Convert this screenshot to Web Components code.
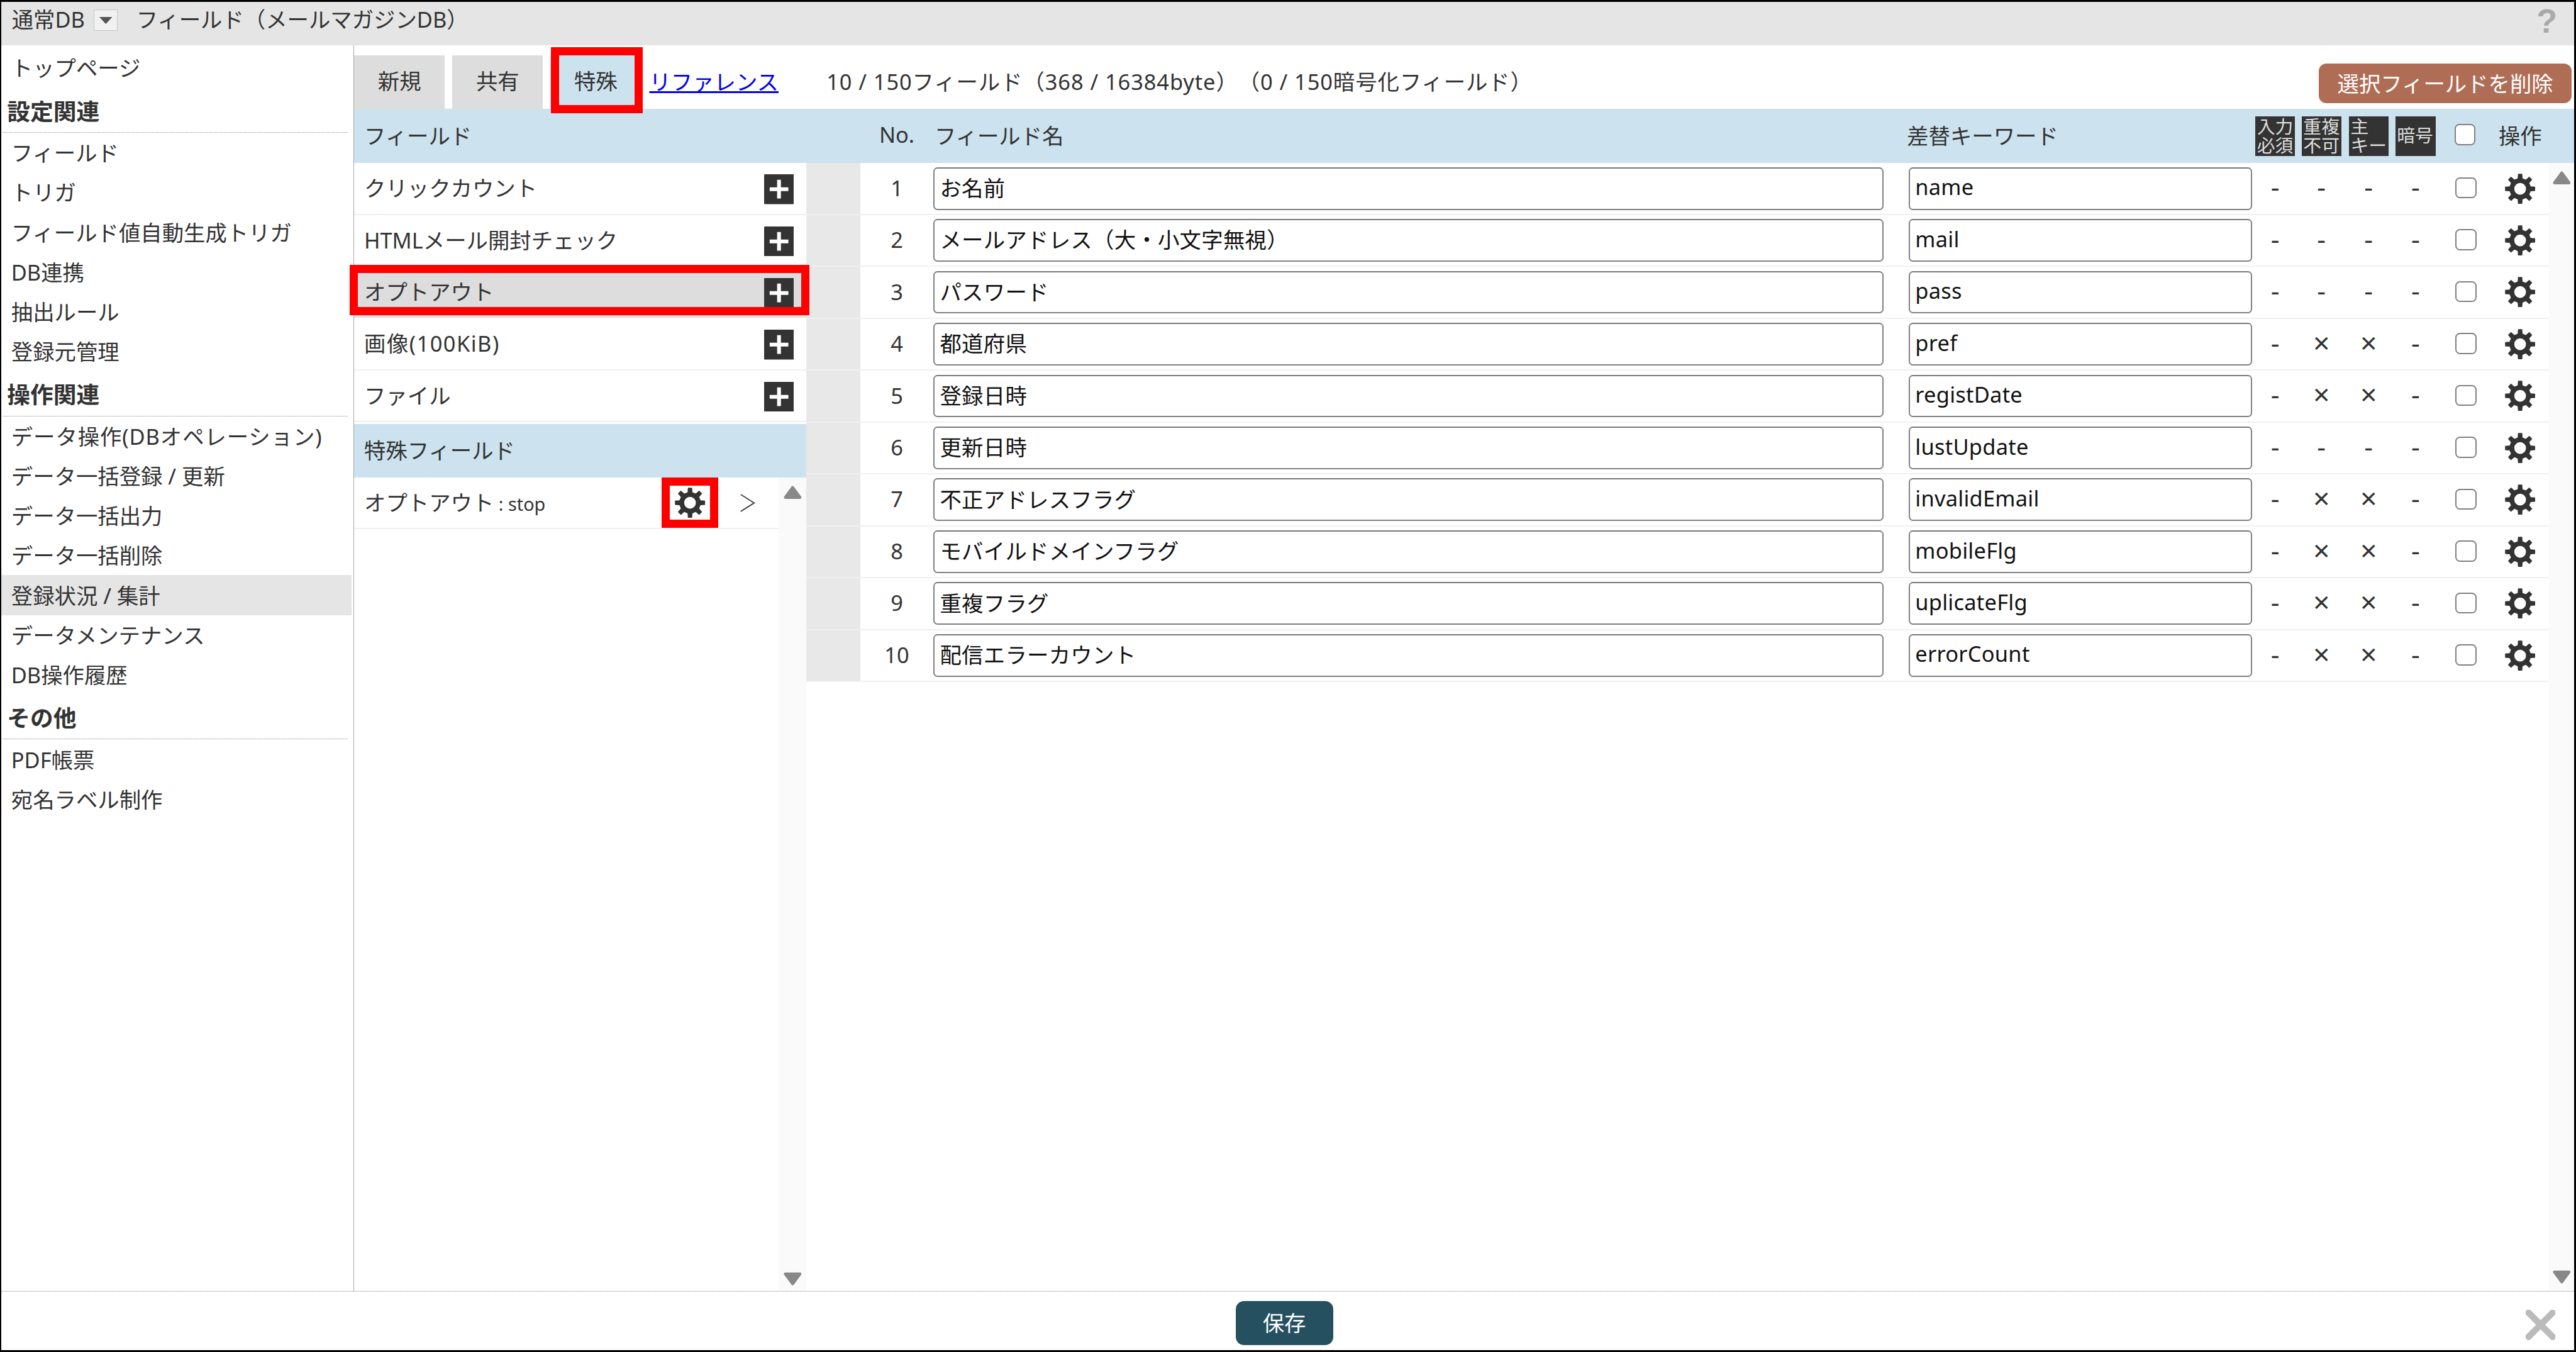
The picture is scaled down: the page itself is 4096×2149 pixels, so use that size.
<!DOCTYPE html>
<html lang="ja"><head><meta charset="utf-8"><title>フィールド</title>
<style>
html,body{margin:0;padding:0;overflow:hidden;background:#fff}
body{font-family:"Noto Sans","Noto Sans CJK JP",sans-serif;font-size:37px;color:#333;text-spacing-trim:space-all}
</style></head><body>
<script>
function gearPath(){
  let p='',R=26,r=18.5;
  const pt=(rad,deg)=>{const t=deg*Math.PI/180;return (rad*Math.sin(t)).toFixed(2)+' '+(-rad*Math.cos(t)).toFixed(2)};
  for(let i=0;i<8;i++){const a=i*45;
    p+=(i?'L':'M')+pt(r,a-13)+'L'+pt(R,a-8)+'L'+pt(R,a+8)+'L'+pt(r,a+13);
  }
  return p+'ZM-10 0A10 10 0 1 0 10 0A10 10 0 1 0 -10 0Z';
}
const GEAR=gearPath();
function def(name,css,html){
  customElements.define(name,class extends HTMLElement{
    constructor(){super();this.attachShadow({mode:'open'});
      if(typeof html!=='function')this.shadowRoot.innerHTML='<style>'+css+'</style>'+html;}
    connectedCallback(){if(typeof html==='function'&&!this._i){this._i=1;this.shadowRoot.innerHTML='<style>'+css+'</style>'+html(this)}}
  });
}
def('gear-icon',':host{display:block;width:52px;height:52px}svg{display:block;width:100%;height:100%}',
 '<svg viewBox="-26 -26 52 52"><path fill="#333" fill-rule="evenodd" d="'+GEAR+'"/></svg>');
def('plus-icon',':host{display:block;width:51px;height:51px}svg{display:block;width:100%;height:100%}',
 '<svg viewBox="0 0 51 51"><rect width="51" height="51" rx="1" fill="#333"/><path d="M9.5 25.5H41.5M25.5 9.5V41.5" stroke="#fff" stroke-width="6.5"/></svg>');
def('tick-box',':host{display:block;width:36px;height:36px;box-sizing:border-box;background:#fff;border:2.6px solid #808080;border-radius:8px}','');
def('tri-icon',':host{display:block;width:31px;height:23px}svg{display:block;width:100%;height:100%}',
 '<svg viewBox="0 0 31 23"><path d="M15.5 3L28 20H3Z" fill="#888" stroke="#888" stroke-width="5" stroke-linejoin="round"/></svg>');
def('scroll-strip',':host{display:flex;flex-direction:column;justify-content:space-between;align-items:center;background:#fafafa;box-sizing:border-box}tri-icon:last-child{transform:rotate(180deg)}',
 '<tri-icon></tri-icon><tri-icon></tri-icon>');
def('red-mark',':host{display:block;position:absolute;box-sizing:border-box;border:14px solid #f00;pointer-events:none}','');

def('title-bar',`:host{display:flex;align-items:center;height:74px;flex:none;background:#e5e5e5;padding-left:18px;position:relative;padding-bottom:17px;box-sizing:border-box}
 .dd{width:41px;height:37px;box-sizing:border-box;border:2px solid #c4c4c4;background:#f1f1f1;border-radius:3px;margin:6px 32px 0 15px;display:flex;align-items:center;justify-content:center}
 .q{margin:9px 29px 0 auto;font:bold 58px/1 "Liberation Sans",sans-serif;color:#aaa}`,
 `<span>通常DB</span><span class="dd"><svg width="22" height="12" viewBox="0 0 22 12"><path d="M0 0H22L11 12Z" fill="#555"/></svg></span><span><slot></slot></span><span class="q">?</span>`);

def('menu-item',`:host{display:flex;align-items:center;height:68px;box-sizing:border-box;padding:0 0 3px 17px;white-space:nowrap;margin-right:4px}
 :host([on]){background:#e5e5e5}:host([top]){height:70px}`,'<slot></slot>');
def('menu-head',`:host{display:flex;align-items:center;height:77px;box-sizing:border-box;padding:0 0 0 8px;font-size:39.6px;font-weight:700;border-bottom:2px dotted #888;margin:0 10px 0 2px;white-space:nowrap}`,'<span><slot></slot></span>');
def('side-menu',`:host{display:block;width:604px;flex:none;box-sizing:border-box;border-right:2px solid #a6a6a6;padding-top:3px}`,'<slot></slot>');

def('tab-item',`:host{display:flex;align-items:center;justify-content:center;width:155px;height:92px;flex:none;background:#ddd;padding-bottom:6px;box-sizing:border-box}
 :host([on]){background:#cce2ee}`,'<slot></slot>');
def('tab-bar',`:host{display:flex;align-items:flex-start;height:109px;flex:none;padding-top:17px;box-sizing:border-box;white-space:nowrap}
 .tabs{display:flex;gap:13px}
 a{height:88px;display:flex;align-items:center;margin-left:14px;color:#00e;text-decoration:underline}
 .info{height:88px;display:flex;align-items:center;margin-left:82px;letter-spacing:1px}
 .del{margin:14px 4px 0 auto;height:68px;width:433px;box-sizing:border-box;background:#b06d56;color:#fff;border-radius:13px;display:flex;align-items:center;justify-content:center;padding-bottom:3px}`,
 `<div class="tabs"><tab-item>新規</tab-item><tab-item>共有</tab-item><tab-item on>特殊</tab-item></div><a href="#">リファレンス</a><div class="info">10 / 150フィールド（368 / 16384byte）（0 / 150暗号化フィールド）</div><div class="del">選択フィールドを削除</div>`);

def('palette-row',`:host{display:flex;align-items:center;height:88.6px;flex:none;box-sizing:border-box;border-bottom:3px solid #f0f0f0;padding-left:17px}
 :host([on]){background:#ddd}
 span{flex:1;padding-bottom:5px;white-space:nowrap}
 plus-icon{margin:3px 22px 0 0}`,'<span><slot></slot></span><plus-icon></plus-icon>');
def('field-palette',`:host{display:flex;flex-direction:column;width:774px;flex:none}
 .h{height:93px;flex:none;background:#cce2ee;display:flex;align-items:center;padding:0 0 5px 17px;box-sizing:border-box}
 .s{height:92px;flex:none;background:#cce2ee;display:flex;align-items:center;padding:0 0 5px 17px;box-sizing:border-box;margin-top:3px}
 .b{flex:1;display:flex;min-height:0}
 .l{flex:1;min-width:0}
 .o{display:flex;align-items:center;height:88px;box-sizing:border-box;border-bottom:3px solid #f0f0f0;padding-left:17px;white-space:nowrap}
 .o span{width:532px;padding-bottom:5px;font-size:31px}.o span b{font-weight:400;font-size:37px}
 svg{margin-left:58px}
 scroll-strip{width:48px;padding:14px 0 10px}`,
 `<div class="h">フィールド</div><slot></slot><div class="s">特殊フィールド</div><div class="b"><div class="l"><div class="o"><span><b>オプトアウト</b> : stop</span><gear-icon></gear-icon><svg width="27" height="31" viewBox="0 0 27 31"><path d="M2 1L25 15.5L2 30" fill="none" stroke="#444" stroke-width="2"/></svg></div></div><scroll-strip></scroll-strip></div>`);

const COLS='92px 125px 1626px 43px 588px 78px 80.5px 81px 80px 92.5px 93px';
def('field-row',`:host{display:grid;grid-template-columns:${COLS};align-items:center;height:88.75px;box-sizing:border-box;border-bottom:3px solid #f0f0f0}
 .g{background:#e8e8e8;align-self:stretch}
 .n{text-align:center;padding-bottom:3px}
 .i{height:73px;box-sizing:border-box;border:2.4px solid #808080;border-top-color:#777;border-radius:7px;background:#fff;color:#111;display:flex;align-items:center;padding:0 0 6px 9px;white-space:nowrap;overflow:hidden;letter-spacing:.3px}
 .m{text-align:center;font-size:46px;line-height:60px;height:60px;padding-bottom:5px}
 .m.x{font-size:50px}
 tick-box,gear-icon{justify-self:center}
 tick-box{margin-top:-2px}`,
 h=>{const c=(h.getAttribute('marks')||'----').split('').map(x=>x==='x'?'<div class="m x">×</div>':'<div class="m">-</div>').join('');
   return `<div class="g"></div><div class="n">${h.getAttribute('no')}</div><div class="i">${h.getAttribute('label')}</div><div></div><div class="i">${h.getAttribute('key')}</div>${c}<tick-box></tick-box><gear-icon></gear-icon>`});
def('col-badge',`:host{display:block;width:68px;height:68px;background:#333;color:#ddd;font-size:31px;line-height:33px;box-sizing:border-box;padding:1px 0 0 3px;white-space:pre;text-align:left}
 :host([one]){padding-top:16px;padding-left:2px}`,'<slot></slot>');
def('field-table',`:host{display:flex;flex-direction:column;flex:1;min-width:0}
 .h{display:grid;grid-template-columns:${COLS} 43px;height:93px;flex:none;background:#cce2ee;align-items:center;white-space:nowrap}
 .h>div{padding-bottom:5px}
 .no{text-align:center;grid-column:2}
 .k{grid-column:5;margin-left:-3px}
 col-badge{justify-self:center}
 tick-box{justify-self:center;margin:-5px 4px 0 0}
 .op{justify-self:center}
 .b{flex:1;display:flex;min-height:0}
 .l{flex:1;min-width:0}
 scroll-strip{width:43px;padding:13px 0 13px}`,
 `<div class="h"><div class="no">No.</div><div style="padding-left:2px">フィールド名</div><div></div><div class="k">差替キーワード</div>
 <col-badge>入力
必須</col-badge><col-badge>重複
不可</col-badge><col-badge>主
キー</col-badge><col-badge one>暗号</col-badge><tick-box></tick-box><div class="op">操作</div></div>
 <div class="b"><div class="l"><slot></slot></div><scroll-strip></scroll-strip></div>`);

def('foot-bar',`:host{display:flex;align-items:flex-start;height:101px;flex:none;box-sizing:border-box;border-top:2px dotted #888;padding-left:2112px}
 .s{width:167px;height:75px;margin-top:16px;background:#24505f;color:#fff;border-radius:14px;display:flex;align-items:center;justify-content:center;padding-bottom:4px;box-sizing:border-box}
 svg{margin:31px 32px 0 auto}`,
 `<div class="s">保存</div><svg width="51" height="51" viewBox="0 0 51 51"><path d="M5 5L46 46M46 5L5 46" stroke="#bbb" stroke-width="11" stroke-linecap="square"/></svg>`);

def('app-window',`:host{display:flex;flex-direction:column;position:relative;zoom:.92922;width:4408px;height:2313px;box-sizing:border-box;border:4px solid #000;border-left-width:3px;background:#fff;overflow:hidden}
 .m{flex:1;display:flex;min-height:0}
 .c{flex:1;display:flex;flex-direction:column;min-width:0}
 .r{flex:1;display:flex;min-height:0}
 ::slotted(red-mark){position:absolute}`,
 `<slot name="title"></slot><div class="m"><slot name="menu"></slot><div class="c"><tab-bar></tab-bar><div class="r"><slot name="palette"></slot><slot name="table"></slot></div></div></div><foot-bar></foot-bar><slot name="marks"></slot>`);
</script>

<app-window>
 <title-bar slot="title">フィールド（メールマガジンDB）</title-bar>
 <side-menu slot="menu">
  <menu-item top>トップページ</menu-item>
  <menu-head>設定関連</menu-head>
  <menu-item>フィールド</menu-item><menu-item>トリガ</menu-item><menu-item>フィールド値自動生成トリガ</menu-item><menu-item>DB連携</menu-item><menu-item>抽出ルール</menu-item><menu-item>登録元管理</menu-item>
  <menu-head>操作関連</menu-head>
  <menu-item style="letter-spacing:1px">データ操作(DBオペレーション)</menu-item><menu-item>データ一括登録 / 更新</menu-item><menu-item>データ一括出力</menu-item><menu-item>データ一括削除</menu-item><menu-item on>登録状況 / 集計</menu-item><menu-item>データメンテナンス</menu-item><menu-item>DB操作履歴</menu-item>
  <menu-head>その他</menu-head>
  <menu-item>PDF帳票</menu-item><menu-item>宛名ラベル制作</menu-item>
 </side-menu>
 <field-palette slot="palette">
  <palette-row>クリックカウント</palette-row><palette-row>HTMLメール開封チェック</palette-row><palette-row on>オプトアウト</palette-row><palette-row style="letter-spacing:1.6px">画像(100KiB)</palette-row><palette-row>ファイル</palette-row>
 </field-palette>
 <field-table slot="table">
  <field-row no="1" label="お名前" key="name"></field-row>
  <field-row no="2" label="メールアドレス（大・小文字無視）" key="mail"></field-row>
  <field-row no="3" label="パスワード" key="pass"></field-row>
  <field-row no="4" label="都道府県" key="pref" marks="-xx-"></field-row>
  <field-row no="5" label="登録日時" key="registDate" marks="-xx-"></field-row>
  <field-row no="6" label="更新日時" key="lustUpdate"></field-row>
  <field-row no="7" label="不正アドレスフラグ" key="invalidEmail" marks="-xx-"></field-row>
  <field-row no="8" label="モバイルドメインフラグ" key="mobileFlg" marks="-xx-"></field-row>
  <field-row no="9" label="重複フラグ" key="uplicateFlg" marks="-xx-"></field-row>
  <field-row no="10" label="配信エラーカウント" key="errorCount" marks="-xx-"></field-row>
 </field-table>
 <red-mark slot="marks" style="left:941px;top:77px;width:157px;height:114px"></red-mark>
 <red-mark slot="marks" style="left:596px;top:450px;width:787px;height:86px"></red-mark>
 <red-mark slot="marks" style="left:1130px;top:814px;width:97px;height:86px"></red-mark>
</app-window>
</body></html>
